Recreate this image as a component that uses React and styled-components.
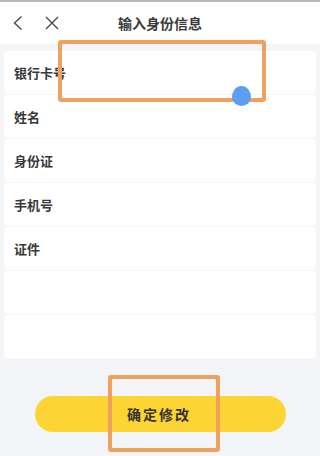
import React from "react";
import styled, { createGlobalStyle } from "styled-components";

const GlobalStyle = createGlobalStyle`
  html, body {
    margin: 0;
    padding: 0;
    background: #f3f5f9;
    font-family: "Noto Sans CJK SC", "Noto Sans", sans-serif;
  }
`;

const Page = styled.div`
  position: relative;
  width: 320px;
  height: 456px;
  overflow: hidden;
  background: #f3f5f9;
  display: flex;
  flex-direction: column;
`;

const StatusLine = styled.div`
  height: 2px;
  background: #b9b9b9;
`;

const Header = styled.header`
  height: 42px;
  background: #ffffff;
  display: flex;
  align-items: center;
  position: relative;
`;

const NavIcons = styled.div`
  display: flex;
  align-items: center;
  gap: 21px;
  padding-left: 12px;
  z-index: 1;
`;

const Title = styled.h1`
  position: absolute;
  left: 0;
  right: 0;
  margin: 0;
  text-align: center;
  font-size: 14px;
  font-weight: 700;
  color: #3a3a3a;
`;

const List = styled.div`
  display: flex;
  flex-direction: column;
  gap: 1px;
  padding: 7px 4px 0;
`;

const Row = styled.div`
  height: 43px;
  background: #ffffff;
  border-radius: 4px;
  display: flex;
  align-items: center;
  padding-left: 10px;
  font-size: 13px;
  font-weight: 600;
  color: #383838;
`;

const Footer = styled.div`
  display: flex;
  justify-content: center;
  padding-top: 38px;
`;

const SubmitButton = styled.button`
  width: 251px;
  height: 36px;
  border: none;
  border-radius: 18px;
  background: #fcd434;
  font-family: inherit;
  font-size: 14px;
  font-weight: 700;
  letter-spacing: 2px;
  padding-left: 4px;
  color: #333333;
`;

const Marker = styled.div`
  position: absolute;
  left: ${(p) => p.x}px;
  top: ${(p) => p.y}px;
  width: ${(p) => p.w}px;
  height: ${(p) => p.h}px;
  box-sizing: border-box;
  border: 4px solid #f0a160;
  border-radius: 3px;
  pointer-events: none;
`;

const TouchDot = styled.div`
  position: absolute;
  left: 232px;
  top: 86px;
  width: 19px;
  height: 20px;
  border-radius: 50% 50% 50% 50% / 55% 55% 45% 45%;
  background: #5c9ef0;
`;

const rows = ["银行卡号", "姓名", "身份证", "手机号", "证件", "", ""];

export default function App() {
  return (
    <Page>
      <GlobalStyle />
      <StatusLine />
      <Header>
        <NavIcons>
          <svg width="12" height="16" viewBox="0 0 12 16">
            <path d="M9.5 1.5 L2.5 8 L9.5 14.5" fill="none" stroke="#4a4a4a" strokeWidth="1.4" />
          </svg>
          <svg width="14" height="14" viewBox="0 0 14 14">
            <path d="M1 1 L13 13 M13 1 L1 13" fill="none" stroke="#4a4a4a" strokeWidth="1.4" />
          </svg>
        </NavIcons>
        <Title>输入身份信息</Title>
      </Header>
      <List>
        {rows.map((label, i) => (
          <Row key={i}>{label}</Row>
        ))}
      </List>
      <Footer>
        <SubmitButton>确定修改</SubmitButton>
      </Footer>
      <Marker x={58} y={40} w={208} h={62} />
      <TouchDot />
      <Marker x={108} y={375} w={112} h={77} />
    </Page>
  );
}
